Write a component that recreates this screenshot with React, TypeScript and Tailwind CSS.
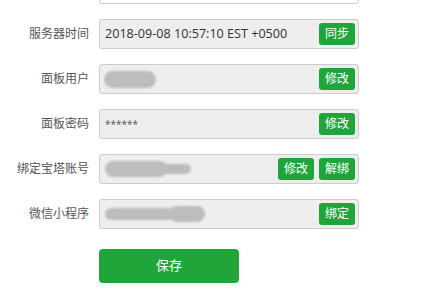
import React from 'react';

const font = { fontFamily: '"Open Sans", "Noto Sans CJK SC", sans-serif' };

function Btn({ children }: { children: React.ReactNode }) {
  return (
    <span className="flex h-[22px] w-[36px] items-center justify-center rounded-[3px] bg-[#20a53a] text-[12px] leading-none text-white">
      {children}
    </span>
  );
}

function Blur({ className }: { className: string }) {
  return <span className={`block rounded-full bg-[#bdbdbd] blur-[1px] ${className}`} />;
}

function Row({ label, children, buttons }: { label: string; children?: React.ReactNode; buttons: string[] }) {
  return (
    <div className="flex h-[30px] items-center">
      <div className="w-[89px] text-right text-[12px] text-[#555]">{label}</div>
      <div className="ml-[10px] flex h-[30px] w-[260px] items-center justify-between rounded-[3px] border border-[#ccc] bg-[#eee] pl-[5px] pr-[3px]">
        <div className="flex flex-1 items-center text-[12.6px] text-[#333]">{children}</div>
        <div className="flex gap-[5px]">
          {buttons.map((b) => (
            <Btn key={b}>{b}</Btn>
          ))}
        </div>
      </div>
    </div>
  );
}

export default function App() {
  return (
    <div className="h-[290px] w-[422px] overflow-hidden bg-white" style={font}>
      <div className="flex flex-col gap-[15px]">
        {/* cut-off field above */}
        <div className="-mt-[26px] ml-[99px] h-[30px] w-[260px] rounded-[3px] border border-[#ccc] bg-white" />

        <Row label="服务器时间" buttons={['同步']}>
          2018-09-08 10:57:10 EST +0500
        </Row>
        <Row label="面板用户" buttons={['修改']}>
          <Blur className="h-[17px] w-[52px] -ml-[1px]" />
        </Row>
        <Row label="面板密码" buttons={['修改']}>
          <span className="text-[10px] text-[#555]">******</span>
        </Row>
        <Row label="绑定宝塔账号" buttons={['修改', '解绑']}>
          <span className="flex items-center">
            <Blur className="h-[16px] w-[62px]" />
            <Blur className="-ml-[6px] h-[10px] w-[30px]" />
          </span>
        </Row>
        <Row label="微信小程序" buttons={['绑定']}>
          <span className="flex items-center">
            <Blur className="h-[12px] w-[70px]" />
            <Blur className="-ml-[6px] h-[16px] w-[36px]" />
          </span>
        </Row>

        <div className="ml-[99px] mt-[5px] flex h-[34px] w-[140px] items-center justify-center rounded-[4px] bg-[#20a53a] text-[13px] text-white">
          保存
        </div>
      </div>
    </div>
  );
}
